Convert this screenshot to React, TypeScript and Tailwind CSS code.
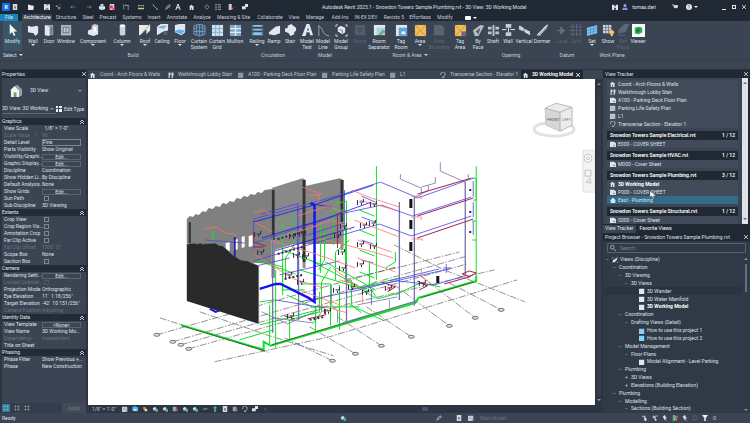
import type { ReactNode } from "react";
import clsx from "clsx";

const W = "#e4e8ee";
const B = "#8cc4ea";

/* ---------- icons ---------- */

const ribbonArt: Record<string, ReactNode> = {
  modify: <path d="M4 0v11l2.6-2.4L8.4 13l1.8-.8-1.9-4H12z" fill="#f4f6f8" />,
  wall: <path d="M1 2l4 1 6-1 1 1v7l-3 3-2-3-6-1z" fill={W} />,
  door: <><path d="M2 1h9v11H2z" fill="#98a1ad" /><path d="M2 1l5 2v10l-5-1z" fill={W} /><path d="M8 3h2v8H8z" fill="#6c7582" /></>,
  window: <><path d="M1 1h11v11H1z" fill="#aab1bb" /><path d="M3 3h7v7H3z" fill="#6d7683" /><path d="M4 4h2v5H4zM7 4h2v5H7zM1 11h11v1H1z" fill="#c5cad2" /></>,
  component: <><path d="M1 7l5-2 6 1v5l-5 2-6-2z" fill={W} /><path d="M5 2l3-2 4 1v6l-3 1-4-2z" fill="#c9ced6" /><path d="M7 3h3v5H7z" fill="#fff" /></>,
  column: <><path d="M4 2c0-2 6-2 6 0v9c0 2-6 2-6 0z" fill="#cdd3db" /><path d="M4 2c0-2 6-2 6 0s-6 2-6 0" fill="#f6f7f9" /></>,
  roof: <><path d="M0 1h12v6L8 11V6L1 12H0z" fill="#eceae5" /><path d="M12 0L4 9" stroke="#9aa1ab" /></>,
  ceiling: <><path d="M1 3l4-3h8v7l-5 1-7 4z" fill={W} /><path d="M2 4l4-2 6 0-4 3z" fill="#71b3e2" /><path d="M8 8h4v4H8z" fill="#57606d" /></>,
  floor: <><path d="M1 1l5-1h6v9l-4 3-7-3z" fill={W} /><path d="M0 8l5-2 7 1-4 4z" fill="#5fb0ea" /></>,
  curtainSystem: <><path d="M1 2l6-2 6 2v9l-6 2-6-2z" fill="#41566d" stroke="#7fb4dc" strokeWidth=".8" /><path d="M1 5l6-1 6 1M1 8h12M4 1v11M7 0v13M10 1v11" stroke="#7fb4dc" strokeWidth=".7" /></>,
  curtainGrid: <><path d="M1 1h12v12H1z" fill="#cfe2f2" /><path d="M5 1v12M9 1v12M1 5h12M1 9h12" stroke="#6fa6cf" strokeWidth=".8" /></>,
  mullion: <><path d="M1 1h12v12H1z" fill="#7fa9cb" /><path d="M7 1v12M1 5h12M1 9h12" stroke="#e5ebf1" strokeWidth="1.4" /></>,
  railing: <><path d="M1 1h12v2H1zM1 5h12v2H1zM1 9h12v3H1z" fill={B} /><path d="M2 1v12M12 1v12" stroke="#41617c" /></>,
  ramp: <path d="M1 9l7-6 5-1v8l-6 2-6-1z" fill={W} />,
  stair: <path d="M1 5l3-1V2l4-2 2 2 3 2v3l-2 2v2l-4 2-2-3-4-2z" fill={W} />,
  modelText: <><path d="M1 13L6 0h3l4 12h-3l-1-3H6l-1 4zM6.5 7h2.2L7.6 4z" fill={W} /></>,
  modelLine: <path d="M2 1v12M2 3c2 0 3 1 4 4s3 5 7 6" stroke="#9fa8b4" fill="none" />,
  modelGroup: <><path d="M1 3V1h2M11 1h2v2M13 11v2h-2M3 13H1v-2" stroke={W} fill="none" /><path d="M3 4l3-2 5 2v5l-3 2-5-3z" fill={W} /><path d="M5 6l3 1v3" stroke="#6d7683" fill="none" /></>,
  dimBox: <><path d="M1 1h11v11H1z" fill="#535c6a" /><path d="M4 4h5v5H4z" fill="#495260" /></>,
  dimSheet: <path d="M1 1h8l3 3v8H1z" fill="#5a6371" />,
  roomSep: <><path d="M1 1h12v11H1z" fill="#a9cfe9" /><path d="M1 1h12v3H1zM1 1h3v11H1z" fill="#dfe5eb" /><path d="M6 11l5-5 2 2-5 4z" fill="#58b868" /><path d="M10 10l3-3v3z" fill="#e6853a" /></>,
  tagRoom: <><path d="M1 1h12v12H1z" fill="#dfe5eb" /><path d="M4 4h9v9H4z" fill="#5da6d8" /><path d="M7 8h4v3H7z" fill="#eef3f7" /></>,
  area: <><path d="M1 1h12v12H1z" fill="#f1bd5a" /><path d="M1 1l12 12M13 1L1 13" stroke="#b98a35" strokeWidth=".8" /></>,
  tagArea: <><path d="M1 1h12v12H1z" fill="#f1bd5a" /><path d="M1 1l12 12M13 1L1 13" stroke="#b98a35" strokeWidth=".8" /><path d="M8 8h5v5H8z" fill="#7a5d8f" /></>,
  byFace: <><path d="M1 7l8-6 4 1-6 11-4 0z" fill="#b6bdc7" /><path d="M4 8l5-4-2 7z" fill="#525b69" /></>,
  shaft: <path d="M1 3h4v3H1zM9 3h4v3H9zM1 8h4v3H1zM9 8h4v3H9zM6 1h2v12H6z" fill="#bdc4cd" />,
  openWall: <><path d="M4 0h6v4H4zM4 9h6v4H4z" fill="#c6ccd4" /><path d="M0 6h5M9 6h5M7 4v5" stroke={W} /></>,
  vertical: <><path d="M1 2l5 2v4L1 6zM7 5l6 3v4L7 9z" fill="#c6ccd4" /><path d="M2 2l10 9" stroke={W} /></>,
  dormer: <><path d="M1 12L9 3l4-3-1 4-8 9z" fill="#aeb5bf" /><path d="M1 12L12 1" stroke={W} /></>,
  level: <path d="M1 7h8M5 3l4 4-4 4z" stroke="#6c7583" fill="#5a6371" />,
  grid: <path d="M3 0v13M7 0v13M11 0v13M0 3h13M0 7h13M0 11h13" stroke="#687180" strokeDasharray="2 1" />,
  set: <><path d="M1 4l11-3v9L1 13z" fill="#7cc0f0" /><path d="M1 7l11-3M1 10l11-3M5 3v9M8 2v9" stroke="#4285b8" strokeWidth=".6" /></>,
  show: <><path d="M1 1h9v9H1z" fill="#cfd5dd" /><path d="M4 1v9M7 1v9M1 4h9M1 7h9" stroke="#66707d" strokeWidth=".8" /><circle cx="10.500" cy="9" r="2.500" fill="#f4c84c" /><path d="M9.500 11h2v2h-2z" fill="#e6e0c8" /></>,
  refPlane: <path d="M2 7l5-6 6-1-4 8-7 2zM1 12h8" fill="#5f6876" stroke="#5f6876" />,
  viewer: <><path d="M0 0h14v14H0z" fill="#f7faf8" /><path d="M3 4l4-1 4 1v5l-4 2-4-1z" fill="#27a658" /><path d="M5 6l3-1v3l-3 1z" fill="#14793b" /></>,
};

function Art({ name }: { name: string }) {
  return (
    <svg viewBox="0 0 14 14" className="size-[13px] shrink-0" aria-hidden="true">
      {ribbonArt[name]}
    </svg>
  );
}

const smallArt: Record<string, ReactNode> = {
  house: <><path d="M0 4l3-3 4 3H6v4H1V4z" fill="#dfe4ea" /><path d="M3 5h1v3H3z" fill="#39424f" /></>,
  walk: <path d="M1 1h2v3H2v4H1zM5 1h2v4H6v3H5zM3 2h2" fill="#dfe4ea" stroke="#dfe4ea" strokeWidth=".4" />,
  sheet: <><path d="M0 1h5l3 2v5H0z" fill="#dfe4ea" /><path d="M4 5h3v2H4z" fill="#9aa3af" /></>,
  plan: <><path d="M0 1h7v7H0z" fill="#c8ced6" /><path d="M2 3h2v2H2zM5 5h2v3H5z" fill="#98a0ac" /></>,
  planDim: <path d="M0 1h7v7H0z" fill="#8e96a3" />,
  section: <path d="M1 4a3 3 0 1 1 5 1L4 8 3 6" stroke="#cfd5dc" fill="none" />,
  elevation: <><path d="M0 5l4-4 4 4z" fill="#fff" /><path d="M1 5h6v3H1z" fill="#dce8ef" /></>,
  cube: <path d="M0 1h7v7H0z" fill="#e2e6f2" />,
  blueCube: <path d="M0 1h7v7H0z" fill="#86cdfa" />,
  views: <><path d="M0 2V0h2M6 0h2v2M8 6v2H6M2 8H0V6" stroke="#cfd5dc" fill="none" strokeWidth=".8" /><circle cx="3" cy="5" r="2" fill="#e2e6ec" /><circle cx="5.500" cy="3" r="1.500" fill="#e2e6ec" /></>,
  open: <path d="M0 1h3l1 1h3v1h1L7 8H0z" fill="#e6e9ed" />,
  save: <><path d="M0 0h7l1 1v7H0z" fill="#e6e9ed" /><path d="M2 0h4v2H2zM2 5h4v3H2z" fill="#7d8793" /></>,
  doc: <><path d="M1 0h6v8H1z" fill="#d5dae0" /><path d="M3 3h2v3H3z" fill="#5f6976" /></>,
  sync: <path d="M1 2h3v2H1zM4 4h3v3H4zM6 0h1v3" fill="#8a929e" />,
  undo: <path d="M1 4h6M1 4l2-2M1 4l2 2" stroke="#7d8692" fill="none" />,
  redo: <path d="M1 4h6M7 4L5 2M7 4L5 6" stroke="#7d8692" fill="none" />,
  print: <><path d="M0 3h8v4H0z" fill="#e6e9ed" /><path d="M2 0h4v3H2zM2 5h4v3H2z" fill="#bcd6ea" /></>,
  pdf: <><path d="M1 0h6v8H1z" fill="#f6c9d3" /><path d="M0 2h5v4H0zM5 5h3v3H5z" fill="#d9405d" /></>,
  dim: <path d="M1 0v7M7 1v7M3 2h4M5 1L3 2" stroke="#c3c9d1" fill="none" strokeWidth=".8" />,
  measure: <><path d="M0 5h8v2H0z" fill="#d9c87a" /><path d="M0 2h8M0 1v3M8 1v3" stroke="#cdd2d9" strokeWidth=".8" /></>,
  line: <path d="M1 1l6 6M1 1h1M6 7h2" stroke="#b6bdc6" fill="none" />,
  tag: <path d="M1 7l2-4 3-2 1 2-3 2z" fill="none" stroke="#c3c9d1" />,
  text: <path d="M1 8l3-8 3 8M2 5h4" stroke="#e6e9ed" fill="none" strokeWidth="1.300" />,
  diamond: <path d="M4 1l3 3-3 3-3-3z" stroke="#9ba3ae" fill="none" />,
  thin: <path d="M0 1h3M4 1h4M0 4h3M4 4h4M0 7h3M4 7h4" stroke="#cdd2d9" />,
  close: <><path d="M1 0h4v8H1z" fill="#c8ced6" /><path d="M4 4l4 4M8 4L4 8" stroke="#d94b5b" /></>,
  switch: <path d="M0 3h5v4H0zM4 0h4v4H4z" fill="#dfe4ea" />,
  binoculars: <path d="M0 1h3v7H0zM5 1h3v7H5zM3 3h2v2H3z" fill="#dfe4ea" />,
  user: <><circle cx="4" cy="2" r="2" fill="#9d9af2" /><path d="M1 5h6v2H1zM0 7h8v1H0z" fill="#8d8af0" /></>,
  cart: <path d="M0 1h2l1 4h4l1-3H2" stroke="#e6e9ed" fill="#e6e9ed" strokeWidth=".7" />,
  help: <><circle cx="4" cy="4" r="4" fill="#e6e9ed" /><path d="M3 3c0-2 2.500-1 1.500.500L4 5M4 6v1" stroke="#36404d" fill="none" strokeWidth=".8" /></>,
  greenA: <><path d="M1 3l3-2 2 2v3H2z" fill="#cdd5dc" /><path d="M5 4h3v4H5z" fill="#3bb391" /></>,
  orangeA: <><path d="M1 2l3-1 2 3-3 3z" fill="#cf8e4c" /><path d="M4 4h3v3H4z" fill="#d7dce2" /></>,
  blueA: <><path d="M0 2l4-2 4 2v5H1z" fill="#57aef2" /><path d="M2 4h4v2H2z" fill="#dcefff" /></>,
  arrowUp: <path d="M4 0l3 3H5v5H3V3H1z" fill="#49c290" />,
  redA: <><path d="M1 1h5v6H1z" fill="#9aa4b0" /><path d="M4 4l4 3M8 4L4 7" stroke="#db5360" /></>,
  glasses: <path d="M0 5l3-2h5L6 5z" fill="#7b8592" />,
  select: <><path d="M0 1h5v2H0z" fill="#98a1ad" /><path d="M3 2l4 4H5l1 2-2 0-1-2z" fill="#eef0f3" /></>,
  selectRed: <><path d="M1 1h4v3H1z" fill="#b5bcc5" /><path d="M3 3l4 4H5l-1 1z" fill="#eef0f3" /><path d="M5 0l3 3M8 0L5 3" stroke="#e0586a" /></>,
  pin: <path d="M1 2l3-2 1 3 2 1-3 1 3 3-4-2z" fill="#e1e5ea" />,
  greenRed: <><path d="M1 0h3v8H1z" fill="#4cbf86" /><path d="M4 1h4v3H4z" fill="#dd5366" /><path d="M4 3l3 4H5z" fill="#eef0f3" /></>,
  ring: <circle cx="4" cy="4" r="3" stroke="#5d6673" fill="none" />,
  funnel: <path d="M0 0h8L5 4v4H3V4z" fill="#eef0f3" />,
  dots: <path d="M1 1h2v2H1zM5 1h2v2H5zM1 5h2v2H1zM5 5h2v2H5z" fill="#aab2bd" />,
};

function Icon({ name }: { name: string }) {
  return (
    <svg viewBox="0 0 8 8" className="size-1.5 shrink-0" aria-hidden="true">
      {smallArt[name]}
    </svg>
  );
}

function Caret({ className }: { className?: string }) {
  return (
    <svg viewBox="0 0 4 2" className={clsx("h-0.5 w-1 shrink-0", className)} aria-hidden="true">
      <path d="M0 0h4L2 2z" fill="currentColor" />
    </svg>
  );
}

function Cross() {
  return (
    <svg viewBox="0 0 5 5" className="size-1 shrink-0" aria-hidden="true">
      <path d="M0 0l5 5M5 0L0 5" stroke="currentColor" />
    </svg>
  );
}

/* ---------- title bar and ribbon ---------- */

const quick: [string, string][] = [
  ["doc", "w-[10px]"], ["open", "w-[22px]"], ["save", "w-[10px]"], ["sync", "w-[12px]"], ["undo", "w-[18px]"],
  ["redo", "w-[14px]"], ["print", "w-[11px]"], ["pdf", "w-[10px]"], ["dim", "w-[18px]"], ["measure", "w-[12px]"],
  ["line", "w-[16px]"], ["tag", "w-[10px]"], ["text", "w-[10px]"], ["house", "w-[18px]"], ["diamond", "w-[12px]"],
  ["thin", "w-[10px]"], ["close", "w-[16px]"], ["switch", "w-[12px]"],
];

function TitleBar() {
  return (
    <header className="flex h-3.5 shrink-0 items-center bg-[#1f2833]">
      <div className="ml-0.5 grid size-2 place-items-center rounded-[1px] bg-[#1470e6] text-[5px] font-bold text-white">R</div>
      <nav className="flex w-[220px] shrink-0 items-center" aria-label="Quick access">
        {quick.map(([name, w]) => (
          <button key={name} aria-label={name} className={clsx("flex shrink-0 justify-center", w)}>
            <Icon name={name} />
          </button>
        ))}
      </nav>
      <h1 className="ml-[92px] whitespace-nowrap">
        Autodesk Revit 2025.1 - Snowdon Towers Sample Plumbing.rvt - 3D View: 3D Working Model
      </h1>
      <div className="mr-1 ml-auto flex items-center text-[#e6e9ed]">
        <button aria-label="Search" className="mr-1"><Icon name="binoculars" /></button>
        <button className="mr-4 flex items-center gap-1"><Icon name="user" />tomas.deri</button>
        <button aria-label="Store" className="mr-2"><Icon name="cart" /></button>
        <button aria-label="Help" className="flex items-center gap-0.5"><Icon name="help" /><Caret /></button>
        <button aria-label="Minimize" className="mt-1 ml-6 h-px w-1 bg-current" />
        <button aria-label="Maximize" className="ml-1.5 size-1 border border-current" />
        <button aria-label="Close" className="ml-1.5"><Cross /></button>
      </div>
    </header>
  );
}

const ribbonTabs: [string, string][] = [
  ["Structure", "w-[28px]"], ["Steel", "w-[16px]"], ["Precast", "w-[24px]"], ["Systems", "w-[24px]"],
  ["Insert", "w-[20px]"], ["Annotate", "w-[26px]"], ["Analyze", "w-[24px]"], ["Massing & Site", "w-[39px]"],
  ["Collaborate", "w-[34px]"], ["View", "w-[14px]"], ["Manage", "w-[28px]"], ["Add-Ins", "w-[22px]"],
  ["IN-EX DEV", "w-[30px]"], ["Revizto 5", "w-[26px]"], ["Effortless", "w-[26px]"], ["Modify", "w-[24px]"],
];

type Tool = { art: string; label: string; w: string; drop?: boolean; dim?: boolean };
const t = (art: string, label: string, w: string, flag = ""): Tool => ({ art, label, w, drop: flag === "drop", dim: flag === "dim" });

const groups: { name: string; gap: string; drop?: boolean; tools: Tool[] }[] = [
  { name: "Build", gap: "ml-0.5", tools: [
    t("wall", "Wall", "w-[18px]", "drop"), t("door", "Door", "w-[14px]"), t("window", "Window", "w-[20px]"),
    t("component", "Component", "w-[34px]", "drop"), t("column", "Column", "w-[24px]", "drop"), t("roof", "Roof", "w-[22px]", "drop"),
    t("ceiling", "Ceiling", "w-[12px]"), t("floor", "Floor", "w-[24px]", "drop"), t("curtainSystem", "Curtain\nSystem", "w-[14px]"),
    t("curtainGrid", "Curtain\nGrid", "w-[22px]"), t("mullion", "Mullion", "w-[14px]"),
  ] },
  { name: "Circulation", gap: "ml-1.5", tools: [t("railing", "Railing", "w-[18px]", "drop"), t("ramp", "Ramp", "w-[16px]"), t("stair", "Stair", "w-[16px]")] },
  { name: "Model", gap: "ml-px", tools: [t("modelText", "Model\nText", "w-[16px]"), t("modelLine", "Model\nLine", "w-[16px]"), t("modelGroup", "Model\nGroup", "w-[20px]")] },
  { name: "Room & Area", gap: "", drop: true, tools: [
    t("dimBox", "Room", "w-[18px]", "dim"), t("roomSep", "Room\nSeparator", "w-[20px]"), t("tagRoom", "Tag\nRoom", "w-[24px]"),
    t("area", "Area", "w-[14px]", "drop"), t("dimSheet", "Area\nBoundary", "w-[24px]", "dim"), t("tagArea", "Tag\nArea", "w-[18px]"),
  ] },
  { name: "Opening", gap: "", tools: [t("byFace", "By\nFace", "w-[18px]"), t("shaft", "Shaft", "w-[12px]"), t("openWall", "Wall", "w-[18px]"), t("vertical", "Vertical", "w-[14px]"), t("dormer", "Dormer", "w-[22px]")] },
  { name: "Datum", gap: "", tools: [t("level", "Level", "w-[18px]", "dim"), t("grid", "Grid", "w-[10px]", "dim")] },
  { name: "Work Plane", gap: "", tools: [t("set", "Set", "w-[22px]", "drop"), t("show", "Show", "w-[10px]"), t("refPlane", "Ref\nPlane", "w-[20px]", "dim"), t("viewer", "Viewer", "w-[10px]")] },
];

function Ribbon() {
  return (
    <>
      <nav className="flex h-[7px] shrink-0 items-center bg-[#1f2833] text-[#c9ced6]" aria-label="Ribbon tabs">
        <button className="h-full w-[18px] bg-[#1e83bd] text-[#d9edf8]">File</button>
        <button className="ml-1 h-full w-[30px] bg-[#3b4453] text-white">Architecture</button>
        {ribbonTabs.map(([name, w]) => (
          <button key={name} className={clsx("flex shrink-0 justify-center whitespace-nowrap", w)}>{name}</button>
        ))}
        <button aria-label="Ribbon display" className="ml-2 flex items-center gap-0.5 text-white">
          <span className="h-1 w-1.5 rounded-[1px] bg-white" />
          <Caret />
        </button>
      </nav>
      <section className="flex h-[39px] shrink-0 bg-[#3b4453] pl-[3px]" aria-label="Architecture tools">
        <div className="flex w-[19px] shrink-0 flex-col">
          <button className="flex h-[30px] flex-col items-center bg-[#3a5568] pt-[3px]">
            <Art name="modify" />
            <span className="mt-px leading-[6px]">Modify</span>
          </button>
          <button className="flex h-2 items-center gap-0.5 leading-[6px] whitespace-nowrap">Select <Caret /></button>
        </div>
        {groups.map((g) => (
          <div key={g.name} className={clsx("flex shrink-0 flex-col", g.gap)}>
            <div className="flex h-[30px] pt-[3px]">
              {g.tools.map((tool) => (
                <button key={tool.label} className={clsx("flex shrink-0 flex-col items-center leading-[6px]", tool.w, tool.dim && "text-[#5d6674]")}>
                  <Art name={tool.art} />
                  <span className="mt-px whitespace-pre">{tool.label}</span>
                  {tool.drop && <Caret />}
                </button>
              ))}
            </div>
            <div className="flex h-2 items-center justify-center gap-0.5 leading-[6px] whitespace-nowrap text-[#c9ced6]">
              {g.name}
              {g.drop && <Caret />}
            </div>
          </div>
        ))}
      </section>
      <div className="h-2.5 shrink-0 border-t border-b border-t-[#343d4a] border-b-[#2a3340] bg-[#3b4453]" />
    </>
  );
}

/* ---------- properties palette ---------- */

type Kind = "text" | "button" | "check" | "dim" | "boxed" | "dimcheck";
type Prop = [string, string, Kind];
const sections: [string, Prop[]][] = [
  ["Graphics", [
    ["View Scale", "  1/8\" = 1'-0\"", "text"], ["Scale Value    1:", "96", "dim"], ["Detail Level", "Fine", "boxed"],
    ["Parts Visibility", "Show Original", "text"], ["Visibility/Graphi...", "Edit...", "button"], ["Graphic Display...", "Edit...", "button"],
    ["Discipline", "Coordination", "text"], ["Show Hidden Li...", "By Discipline", "text"], ["Default Analysis...", "None", "text"],
    ["Show Grids", "Edit...", "button"], ["Sun Path", "", "check"], ["Sub-Discipline", "3D Viewing", "text"],
  ]],
  ["Extents", [
    ["Crop View", "", "check"], ["Crop Region Vis...", "", "check"], ["Annotation Crop", "", "check"], ["Far Clip Active", "", "check"],
    ["Far Clip Offset", "1000'  0\"", "dim"], ["Scope Box", "None", "text"], ["Section Box", "", "check"],
  ]],
  ["Camera", [
    ["Rendering Setti...", "Edit...", "button"], ["Locked Orientat...", "", "dimcheck"], ["Projection Mode", "Orthographic", "text"],
    ["Eye Elevation", "11'  1 18/256\"", "text"], ["Target Elevation", "-42'  10 151/256\"", "text"], ["Camera Position", "Adjusting", "dim"],
  ]],
  ["Identity Data", [
    ["View Template", "<None>", "button"], ["View Name", "3D Working Mo...", "text"], ["Dependency", "Independent", "dim"], ["Title on Sheet", "", "text"],
  ]],
  ["Phasing", [["Phase Filter", "Show Previous +...", "text"], ["Phase", "New Construction", "text"]]],
];

function PropertyRow({ prop: [label, value, kind] }: { prop: Prop }) {
  const id = "p-" + label.replace(/\W/g, "");
  const dim = kind === "dim" || kind === "dimcheck";
  return (
    <div className={clsx("flex h-[7px] items-center pl-0.5", dim && "text-[#69727f]")}>
      <label htmlFor={id} className="w-[38px] shrink-0 whitespace-pre">{label}</label>
      {kind === "button" ? (
        <button id={id} className="h-1.5 w-[39px] border border-[#596472] leading-[4px]">{value}</button>
      ) : kind === "check" || kind === "dimcheck" ? (
        <input id={id} type="checkbox" disabled={dim} className={clsx("ml-0.5 size-[5px] appearance-none border", dim ? "border-[#4c5664]" : "border-[#7d8794]")} />
      ) : (
        <input id={id} defaultValue={value} disabled={dim}
          className={clsx("h-[7px] bg-transparent outline-none", kind === "boxed" ? "w-[39px] border border-[#7b8592]" : "w-11")} />
      )}
    </div>
  );
}

function Properties() {
  return (
    <aside className="mx-0.5 flex w-[84px] shrink-0 flex-col bg-[#3b4453]">
      <h2 className="flex h-2 shrink-0 items-center justify-between bg-[#1f2833]">Properties <Cross /></h2>
      <div className="flex h-[25px] shrink-0 items-center gap-2 pr-1 pl-2">
        <svg viewBox="0 0 13 13" className="size-3" aria-hidden="true">
          <path d="M0 6l5-5 5 5v7H1V6z" fill="#f3f4f2" />
          <path d="M5 1l3-1 5 5v6l-3 2V6z" fill="#9aa3b5" />
          <path d="M4 8h3v5H4z" fill="#7f9a58" />
        </svg>
        <span className="flex-1">3D View</span>
        <Caret className="text-[#8a93a0]" />
      </div>
      <div className="flex h-3 shrink-0 items-center justify-between pr-1">
        <div className="flex h-2.5 items-center border-b border-[#5c6674] pr-0.5">
          <select aria-label="Type" className="h-2 w-12 appearance-none bg-transparent outline-none">
            <option>3D View: 3D Working</option>
          </select>
          <Caret className="text-[#8a93a0]" />
        </div>
        <button className="flex items-center gap-0.5 whitespace-nowrap">
          <svg viewBox="0 0 6 6" className="size-1.5" aria-hidden="true"><path d="M0 0h2v2H0zM3 0h3v2H3zM0 3h2v3H0zM3 3h3v3H3z" fill="#f0f2f4" /></svg>
          Edit Type
        </button>
      </div>
      <div className="mt-[3px] min-h-0 flex-1">
        {sections.map(([name, props]) => (
          <section key={name}>
            <h3 className="flex h-[7px] items-center justify-between bg-[#222b37] pr-0.5 text-[#e6e9ed]">
              {name}
              <svg viewBox="0 0 4 4" className="size-1" aria-hidden="true"><path d="M0 2l2-2 2 2M0 4l2-2 2 2" stroke="#c5cbd3" fill="none" /></svg>
            </h3>
            {props.map((p) => <PropertyRow key={p[0]} prop={p} />)}
          </section>
        ))}
      </div>
      <footer className="flex h-2.5 shrink-0 items-center gap-1 bg-[#343d4b]">
        <button aria-label="Sort by group" className="grid size-2 place-items-center bg-[#2f7fa3]"><Icon name="dots" /></button>
        <button aria-label="Sort ascending"><Icon name="dots" /></button>
        <button aria-label="Sort descending"><Icon name="dots" /></button>
        <button disabled className="ml-auto h-full w-6 bg-[#414a59] text-[#727b88]">Apply</button>
      </footer>
    </aside>
  );
}

/* ---------- plumbing model ---------- */

const bubbles = [[157, 335], [173, 342], [181, 345], [189, 349], [502, 310], [476, 318], [450, 326], [412, 337], [382, 346], [356, 354], [333, 361]];
const fixtures = [[255, 234], [258, 252], [290, 236], [294, 255], [300, 234], [303, 256], [286, 275], [298, 282], [335, 235], [341, 226], [339, 252], [340, 268], [358, 202], [361, 225], [358, 244], [358, 264], [371, 204], [370, 223], [371, 246], [288, 316], [325, 311], [363, 292], [386, 288], [420, 283], [334, 290], [349, 287]];

function Model() {
  return (
    <svg viewBox="88 79 508 326" className="size-full" aria-label="3D plumbing model" fill="none" strokeWidth=".8">
      <path d="M187 219L190 216L193 217L196 214L199 215L203 211L206 212L209 208L213 209L216 206L220 207L223 203L227 204L230 201L234 202L237 198L241 199L244 196L248 197L251 194L255 195L258 192L262 193L265 190L272 189V264L240 262L187 243z" fill="#808080" />
      <path d="M272 188l31-10 3 2v64h-12l-19 6v27h-3z" fill="#898989" />
      <path d="M306 186l34-8 4 2v64h-8l-30 0z" fill="#868686" />
      <path d="M306 186v0l35-8 3 2v8l32-10 4-1v0z" fill="none" />
      <path d="M189 222h2v22h-2zM272 190h3v50h-3zM303 180h3v82h-3zM341 180h3v42h-3z" fill="#333" />
      <path d="M272 240h3v38h-3zM303 262h3v6h-3zM341 222h3v28h-3z" fill="#909090" />
      <path d="M226 243l4-1v9l-4-1zM234 240l4-1v10l-4 2zM242 237l3-1v11l-3 1zM249 236l4-1v11l-4 1z" fill="#fff" />

      <path d="M160 318l34 11 76 24M200 312l70 24 64 20M157 335l150-43 90-25M173 342l180-53 115-33M181 345l200-57 87-24M189 349l160-45 146-34M215 362l115-25 188-57M395 245l50 25 81 32M420 275l56 43M450 283l52 27M395 285l55 41M367 307l45 30M338 317l44 29M310 327l46 27M285 338l48 23M345 280l60-14 55-14" stroke="#4a4a4a" strokeWidth=".6" strokeDasharray="7 1.500 1.500 1.500" />
      <g stroke="#555" strokeWidth=".8" fill="#ddd">
        {bubbles.map(([x, y]) => <ellipse key={x} cx={x} cy={y} rx="3" ry="1.500" />)}
      </g>

      <g stroke="#12e024" strokeWidth="1">
        <path d="M377 166v114M477 166v113M473 178h4v22h-3M473 221h4M473 240h4" />
        <path d="M334 210h12M334 210v35M335 204l12-3v86M321 223v50M283 220v70h22M283 250l40 15M256 260l40 14M260 302l15-2M270 305v40M260 325l13-3 45-12M276 348V270M300 270l60 18 40-10M310 260l60 32M326 262l50 28M340 285v45M352 280v25l10 8M370 262v25l8 12 22-6M290 340v-20l30-8v-20M316 331v-24h44M331 300v26M350 305l35 16M377 282l-17 8M396 252v10l-10 6M346 225v55l30 18M360 210l15 6M360 230l15 6M360 250l15 6M360 272l15 6M396 295l25-12 20 4M287 295l30 14M301 284h30v20" />
        <path d="M325 228v32l-6 10M294 216v30l-8 12v15M265 262l18 5v28M213 231v12M331 267l-9 15v30l-9 12M350 240l-14 12v28" />
        <path d="M181 325l83 25v-8l7 4 61-18 84-25 3-5 58-17v-5" strokeWidth="2" />
        <path d="M240 340l34-10" />
      </g>
      <path d="M182 326l83 25M272 345l60-18 82-25M421 298l54-16" stroke="#33513b" />

      <g stroke="#7472a8">
        <path d="M273 235v98M299 210v110M347 262v62M400 202v98M415 197v109M466 182v94" strokeWidth="1.300" />
        <path d="M401 174v5l21 9v5M422 187l14-4v-6M441 162v9l25 11M415 198l14-8v-5M469 174v5M343 323l30-9 45-13M390 300v8M332 285v20l6 6v12M273 318l40 5M262 312l26 12 40-18M358 305l40-8" />
      </g>

      <g stroke="#4a45dd">
        <path d="M254 219l90-25 37-12 31 13 6 3 56-20M254 219v30M254 243l91-30 37-8 31 11 59-19M254 261l92-27 34-10 32 12 60-20M262 214l38-11M205 240l40 3M240 270l50-12M305 236l40-13M280 275l60-14M300 302l60-12 45-11 45-10M390 281l50-12M350 290l48-9 37 4 30-9M275 300l50 8M372 289v16M345 190v40M298 204v80M447 264v9M444 268h8M362 196l14 6M362 217l14 5M362 240l12 4M362 260l12 3M474 181v16M474 202v15M474 221v14" />
      </g>
      <g stroke="#1414ef">
        <path d="M254 222l60-17 60-20M262 238l60-18 50-18M275 251l80-24M332 207l-20-3" />
        <path d="M260 289l16-5h5l28 14 6 4v-97l-4-2" strokeWidth="2.500" />
        <path d="M210 309l6 3 5-2" strokeWidth="2" />
      </g>

      <g stroke="#ff7272">
        <path d="M204 229l12-2 10 6 9 1v3M254 213l10-3 6 4M255 222l18 10M303 187l19 7M308 195h12l-2 8M298 216l30-10 20 8M310 228l22-8 20 10M254 254l40 25 30 9M270 240l46 14 40 14M318 238l52 13 24 7M352 190l20 8 28 9M360 200l36 10M355 220l45 17M358 240l34 12M358 258l38 14M412 196h10v3M412 217h10v3M412 239h11v2M422 268v8l10 8M333 268l30 22v14M340 280l18 5M386 290l10-3M300 290l40 15M318 305l30 8M286 236l30-10" />
      </g>
      <path d="M418 194l54-16M418 216l56-18M418 238l56-19M382 282l14 5-8 5M418 281l10 5-8 4M445 284l25-7 7-4-7-2-7 3 8 3M254 232v10l12 4M254 247h10M285 316l10 3M308 319l18-4v-6M338 215v18M338 232v16" stroke="#a2204b" strokeWidth="1" />
      <path d="M410 199h3v9h-3zM410 220h3v9h-3zM410 242h3v9h-3zM437 276h3v7h-3z" fill="#151515" />
      <g stroke="#34253f" strokeWidth="1">
        {fixtures.map(([x, y]) => <path key={`${x}-${y}`} d={`M${x} ${y - 2}v5M${x + 2} ${y}h4v-3M${x + 4} ${y + 1}v2`} />)}
        <path d="M278 239l28-8M278 254l25-7M285 279l18-4M310 320l15-3M472 190h-4M472 212h-4M472 232h-4" strokeWidth="2" strokeDasharray="2 2" />
      </g>

      <path d="M187 244l8-1 1 1 5-1 1 1 14-1 2 2 5 1 10 9 8 5 7 1 11 5v58l-72-23z" fill="#292929" />
      <path d="M187 244l8-1 1 1 5-1 1 1 14-1 2 2 5 1 10 9 8 5 7 1 11 5v58" stroke="#777" />
      <path d="M235 237v21" stroke="#2622a2" strokeWidth="2" />

      <g>
        <ellipse cx="555" cy="129" rx="20" ry="7" stroke="#e2e2e2" strokeWidth="3" />
        <path d="M546 108l11-5 16 4v18l-12 6-14-6z" fill="#ececec" stroke="#a8a8a8" />
        <path d="M546 108l15 4v19l-14-6z" fill="#d6d6d6" />
        <path d="M546 108l15 4 12-5M561 112v19" stroke="#a8a8a8" />
        <text x="548" y="121" fontSize="4" fill="#555">FRONT</text>
        <text x="563" y="121" fontSize="4" fill="#777">LEFT</text>
      </g>
      <g stroke="#b5b8bb">
        <path d="M584 150h12v42h-12z" fill="#f3f3f3" stroke="#dcdcdc" />
        <circle cx="589" cy="158" r="4" fill="#fff" />
        <circle cx="589" cy="158" r="1.500" />
        <path d="M586 170h6v6h-6zM587 182l4-4 1 5z" />
      </g>
    </svg>
  );
}

const docTabs: [string, string, string][] = [
  ["house", "Coord - Arch Floors & Walls", "w-[78px]"], ["walk", "Walkthrough Lobby Stair", "w-[70px]"],
  ["planDim", "A100 - Parking Deck Floor Plan", "w-[84px]"], ["planDim", "Parking Life Safety Plan", "w-[68px]"],
  ["planDim", "L1", "w-[50px]"], ["section", "Transverse Section - Elevator 1", "w-[83px]"],
];
const viewTools = ["plan", "blueA", "orangeA", "greenA", "greenA", "redA", "greenA", "greenA", "glasses", "arrowUp", "doc", "redA", "section", "switch"];

function Canvas() {
  return (
    <main className="flex min-w-0 flex-1 flex-col bg-[#2c3541]">
      <nav className="flex h-[9px] shrink-0 items-center bg-[#3b4453] text-[#c0c6cf]" aria-label="Open views">
        {docTabs.map(([icon, name, w]) => (
          <button key={name} className={clsx("flex shrink-0 items-center gap-1 pl-0.5 whitespace-nowrap", w)}>
            <Icon name={icon} />{name}
          </button>
        ))}
        <button className="flex h-full w-[62px] shrink-0 items-center gap-[3px] bg-[#1f2833] pl-0.5 font-semibold whitespace-nowrap text-white">
          <Icon name="house" />3D Working Model<Cross />
        </button>
      </nav>
      <div className="flex min-h-0 flex-1">
        <div className="min-w-0 flex-1 bg-white"><Model /></div>
        <div className="flex w-2 flex-col items-center bg-[#2c3541] py-1 text-[#8d96a3]">
          <Caret className="rotate-180" />
          <div className="my-1 w-1 flex-1 bg-[#343e4b]" />
          <Caret />
        </div>
      </div>
      <div className="flex h-2 shrink-0 items-center bg-[#2c3541]">
        <span className="ml-1 w-7 whitespace-nowrap text-[#c0c6cf]">1/8" = 1'-0"</span>
        {viewTools.map((name, i) => (
          <button key={i} aria-label={`View control ${i + 1}`} className="flex w-2.5 justify-center"><Icon name={name} /></button>
        ))}
        <span className="ml-1 text-[#7d8794]">&lt;</span>
        <span className="ml-[155px] h-1 w-1.5 bg-[#4a5462]" />
      </div>
    </main>
  );
}

/* ---------- right-hand palettes ---------- */

type Entry = [string, string];
const tracked: { file?: string; count?: string; views: Entry[] }[] = [
  { views: [["house", "Coord - Arch Floors & Walls"], ["walk", "Walkthrough Lobby Stair"], ["sheet", "A100 - Parking Deck Floor Plan"], ["plan", "Parking Life Safety Plan"], ["plan", "L1"], ["section", "Transverse Section - Elevator 1"]] },
  { file: "Snowdon Towers Sample Electrical.rvt", count: "1 / 12", views: [["sheet", "E000 - COVER SHEET"]] },
  { file: "Snowdon Towers Sample HVAC.rvt", count: "1 / 12", views: [["sheet", "M000 - Cover Sheet"]] },
  { file: "Snowdon Towers Sample Plumbing.rvt", count: "3 / 12", views: [["house", "3D Working Model"], ["sheet", "P000 - COVER SHEET"], ["elevation", "East - Plumbing"]] },
  { file: "Snowdon Towers Sample Structural.rvt", count: "1 / 12", views: [["sheet", "S000 - Cover Sheet"]] },
];

function ViewTracker() {
  return (
    <section className="flex h-[163px] shrink-0 flex-col bg-[#1f2833]">
      <h2 className="flex h-2 shrink-0 items-center justify-between px-0.5">View Tracker <Cross /></h2>
      <div className="flex min-h-0 flex-1">
        <div className="relative flex min-w-0 flex-1 flex-col gap-[3px] overflow-hidden bg-[#3b4453] px-1 pt-0.5">
          {tracked.map(({ file, count, views }) => (
            <div key={file ?? "current"} className="shrink-0">
              {file && <h3 className="flex h-[9px] items-center justify-between bg-[#1f2833] px-[3px] font-semibold text-white">{file}<span>{count}</span></h3>}
              {views.map(([icon, name]) => (
                <button key={name} className={clsx("flex h-2 w-full items-center gap-0.5 pl-[3px] whitespace-nowrap", name === "East - Plumbing" ? "bg-[#336b89]" : "bg-[#414b5a]", name === "3D Working Model" && "font-bold text-white")}>
                  <Icon name={icon} />{name}
                </button>
              ))}
            </div>
          ))}
          <svg viewBox="0 0 6 8" className="absolute top-[113px] left-[47px] h-2 w-1.5" aria-hidden="true">
            <path d="M0 0v6l2-1 1 3 1-1-1-2h3z" fill="#fff" stroke="#333" strokeWidth=".3" />
          </svg>
        </div>
        <div className="mr-0.5 flex w-1.5 flex-col items-center justify-between bg-[#dfe2e6] py-1 text-[#666f7b]">
          <Caret className="rotate-180" />
          <Caret />
        </div>
      </div>
      <div className="flex h-[9px] shrink-0 items-center">
        <button className="h-2 bg-[#3b4453] px-0.5">View Tracker</button>
        <button className="h-2 px-1 text-white">Favorite Views</button>
      </div>
    </section>
  );
}

const tree: [string, string, string, string?][] = [
  ["pl-[3px]", "−", "Views (Discipline)", "views"], ["pl-2.5", "−", "Coordination"], ["pl-4", "−", "3D Viewing"], ["pl-[22px]", "−", "3D Views"],
  ["pl-9", "", "3D Wander", "cube"], ["pl-9", "", "3D Water Manifold", "cube"], ["pl-9", "", "3D Working Model", "cube"],
  ["pl-4", "−", "Coordination"], ["pl-[22px]", "−", "Drafting Views (Detail)"], ["pl-9", "", "How to use this project 1", "blueCube"],
  ["pl-9", "", "How to use this project 2", "blueCube"], ["pl-4", "−", "Model Management"], ["pl-[22px]", "−", "Floor Plans"],
  ["pl-9", "", "Model Alignment - Level Parking", "cube"], ["pl-4", "−", "Plumbing"], ["pl-[22px]", "+", "3D Views"],
  ["pl-[22px]", "+", "Elevations (Building Elevation)"], ["pl-2.5", "−", "Plumbing"], ["pl-4", "−", "Modelling"], ["pl-[22px]", "−", "Sections (Building Section)"],
];

function ProjectBrowser() {
  return (
    <section className="flex min-h-0 flex-1 flex-col bg-[#303946]">
      <h2 className="flex h-2 shrink-0 items-center justify-between bg-[#1f2833] px-0.5 whitespace-nowrap">
        Project Browser - Snowdon Towers Sample Plumbing.rvt <Cross />
      </h2>
      <label className="mx-1 mt-0.5 flex h-2.5 shrink-0 items-center gap-1 rounded-[1px] border border-[#596371] pl-0.5">
        <svg viewBox="0 0 8 8" className="size-1.5 shrink-0" aria-hidden="true"><circle cx="3" cy="3" r="2.500" stroke="#c5cbd3" fill="none" /><path d="M5 5l3 3" stroke="#c5cbd3" /></svg>
        <input type="search" aria-label="Search views" placeholder="Search" className="h-2 w-full bg-transparent outline-none placeholder:text-[#7d8794]" />
      </label>
      <div className="mt-[3px] flex min-h-0 flex-1">
        <div className="flex flex-1 flex-col">
          {tree.map(([indent, mark, name, icon], i) => (
            <button key={i} className={clsx("flex flex-1 items-center whitespace-nowrap", indent, name === "3D Working Model" && "font-bold text-white", i === 4 && "bg-[#2a333f]")}>
              {mark && <span className="w-1.5 shrink-0 text-left text-[#c5cbd3]">{mark}</span>}
              {icon && <span className="mr-0.5"><Icon name={icon} /></span>}
              {name}
            </button>
          ))}
        </div>
        <div className="flex w-2 flex-col items-center py-0.5 text-[#8d96a3]">
          <Caret className="rotate-180" />
          <div className="mt-1 h-7 w-0.5 bg-[#667080]" />
          <Caret className="mt-auto" />
        </div>
      </div>
    </section>
  );
}

const selectTools = ["select", "selectRed", "pin", "greenRed", "pin", "ring", "funnel"];

export default function App() {
  return (
    <div className="flex h-screen flex-col overflow-hidden bg-[#2c3541] font-[Roboto,'Open_Sans',sans-serif] text-[5px] leading-[7px] text-[#dde1e7]">
      <TitleBar />
      <Ribbon />
      <div className="flex min-h-0 flex-1">
        <Properties />
        <Canvas />
        <div className="flex w-[147px] shrink-0 flex-col">
          <ViewTracker />
          <ProjectBrowser />
        </div>
      </div>
      <footer className="flex h-2.5 shrink-0 items-center bg-[#3b4453] pl-0.5">
        Ready
        <span className="ml-auto flex w-[410px] items-center">
          <Icon name="greenA" />
          <span className="ml-[90px]"><Icon name="tag" /></span>
          <span className="ml-3.5 flex items-center gap-1.5 text-[#687180]">
            <Icon name="doc" /><Icon name="plan" />
            Main Model
          </span>
          <span className="mr-[34px] ml-auto flex items-center gap-1">
            {selectTools.map((name, i) => (
              <button key={i} aria-label={`Selection option ${i + 1}`}><Icon name={name} /></button>
            ))}
            <span className="text-[#c5cbd3]">:0</span>
          </span>
        </span>
      </footer>
    </div>
  );
}
